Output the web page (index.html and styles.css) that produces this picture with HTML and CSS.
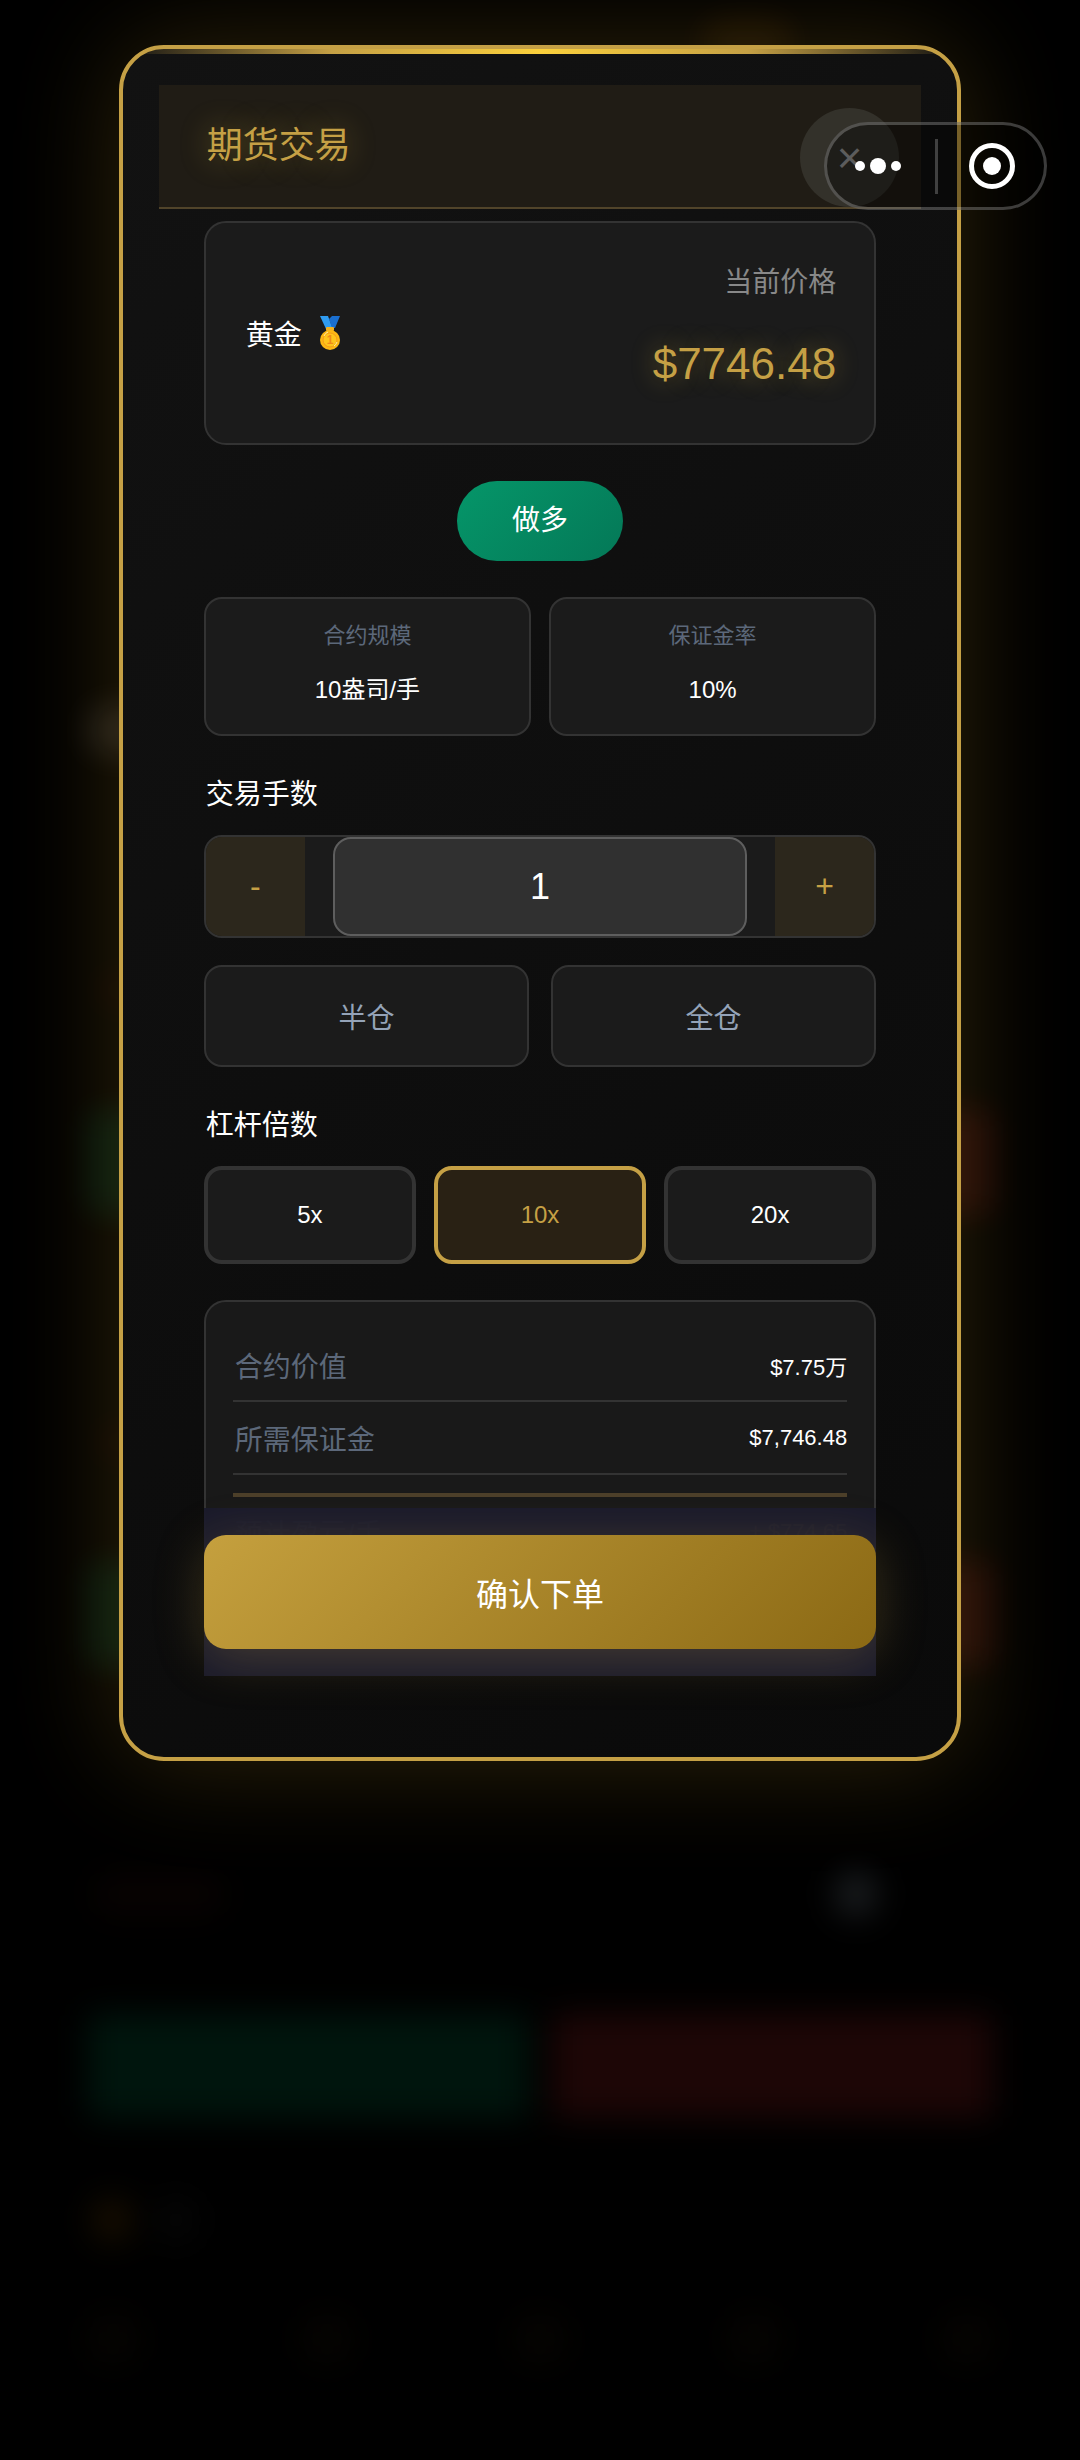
FILE: index.html
```html
<!DOCTYPE html>
<html lang="zh-CN">
<head>
    <meta charset="UTF-8">
    <meta name="viewport" content="width=device-width, initial-scale=1.0">
    <title>期货交易</title>
    <link rel="stylesheet" href="styles.css">
</head>
<body>

    <!-- market page, dimmed behind the dialog -->
    <div class="market" aria-hidden="true">
        <div class="market-top"><span class="blob orange"></span></div>
        <div class="market-title"><span class="blob white"></span></div>
        <div class="market-card">
            <div class="market-info"><span class="blob red"></span><span class="blob pale"></span></div>
            <div class="market-actions"><span class="buy"></span><span class="sell"></span></div>
        </div>
        <div class="market-card">
            <div class="market-info"><span class="blob red"></span><span class="blob pale"></span></div>
            <div class="market-actions"><span class="buy"></span><span class="sell"></span></div>
        </div>
        <div class="market-card">
            <div class="market-info"><span class="blob red"></span><span class="blob pale"></span></div>
            <div class="market-actions"><span class="buy"></span><span class="sell"></span></div>
        </div>
        <div class="market-heading"><span class="blob gold"></span><span class="blob grey"></span></div>
        <div class="market-tabs">
            <span class="blob tab"></span>
            <span class="blob tab"></span>
            <span class="blob tab"></span>
            <span class="blob tab"></span>
            <span class="blob tab"></span>
        </div>
    </div>

    <main class="overlay">
        <section class="modal">
            <header class="modal-header">
                <h1>期货交易</h1>
                <button type="button" class="close-btn" aria-label="关闭">×</button>
            </header>

            <form class="modal-body">
                <div class="price-card">
                    <div class="product">
                        <span>黄金</span>
                        <svg class="medal" viewBox="0 0 20 34">
                            <path d="M0 0h8l5 13H6z" fill="#2f9bf0"/>
                            <path d="M12 0h8l-5 12h-3L9 3z" fill="#1a6fd0"/>
                            <rect x="6" y="11" width="8" height="4" rx="1" fill="#f2b01e"/>
                            <circle cx="10" cy="24" r="10" fill="#fcb814"/>
                            <circle cx="10" cy="24" r="7" fill="#fec51c" stroke="#f49a1a" stroke-width="1"/>
                            <path d="M4 20a7 7 0 0 1 4-4M17 26a7 7 0 0 1-3 4" fill="none" stroke="#fff0a0" stroke-width="1"/>
                            <text x="10" y="28" text-anchor="middle">1</text>
                        </svg>
                    </div>
                    <div class="price">
                        <span class="price-label">当前价格</span>
                        <span class="price-value">$7746.48</span>
                    </div>
                </div>

                <div class="direction">做多</div>

                <div class="info-grid">
                    <div class="info-card">
                        <span class="info-label">合约规模</span>
                        <span class="info-value">10盎司/手</span>
                    </div>
                    <div class="info-card">
                        <span class="info-label">保证金率</span>
                        <span class="info-value">10%</span>
                    </div>
                </div>

                <label class="field-label" for="lots">交易手数</label>
                <div class="stepper">
                    <button type="button" class="step-btn">-</button>
                    <input type="text" id="lots" name="lots" inputmode="numeric" value="1">
                    <button type="button" class="step-btn">+</button>
                </div>
                <div class="quick">
                    <button type="button">半仓</button>
                    <button type="button">全仓</button>
                </div>

                <h2 class="field-label">杠杆倍数</h2>
                <div class="leverage">
                    <button type="button">5x</button>
                    <button type="button" class="active">10x</button>
                    <button type="button">20x</button>
                </div>

                <div class="summary">
                    <div class="summary-row">
                        <span>合约价值</span>
                        <span class="amount">$7.75万</span>
                    </div>
                    <div class="summary-row">
                        <span>所需保证金</span>
                        <span class="amount">$7,746.48</span>
                    </div>
                    <div class="summary-row total">
                        <span>预计盈亏/手</span>
                        <span class="amount">± $774.65</span>
                    </div>
                </div>

                <div class="submit-bar">
                    <button type="submit">确认下单</button>
                </div>
            </form>
        </section>

        <div class="capsule">
            <button type="button" aria-label="更多">
                <svg width="50" height="46" viewBox="0 0 50 46" fill="#fff">
                    <circle cx="7" cy="23" r="5"/>
                    <circle cx="25" cy="23" r="8"/>
                    <circle cx="43" cy="23" r="5"/>
                </svg>
            </button>
            <span class="capsule-line"></span>
            <button type="button" aria-label="退出">
                <svg width="46" height="46" viewBox="0 0 46 46">
                    <circle cx="23" cy="23" r="20.500" fill="none" stroke="#fff" stroke-width="5"/>
                    <circle cx="23" cy="23" r="9" fill="#fff"/>
                </svg>
            </button>
        </div>
    </main>

</body>
</html>
```
FILE: styles.css
```css
* {
    box-sizing: border-box;
}
body {
    margin: 0;
    min-height: 100vh;
    position: relative;
    background: #000;
    color: #fff;
    font-family: "Liberation Sans", "Noto Sans CJK SC", sans-serif;
    font-size: 24px;
}
button, input {
    font-family: inherit;
    color: inherit;
    margin: 0;
    padding: 0;
    border: none;
    background: none;
}
button {
    cursor: pointer;
}

/* dimmed page */
.market {
    display: flex;
    flex-direction: column;
    padding: 0 88px;
    min-height: 100vh;
    filter: blur(16px);
    overflow: hidden;
}
.blob {
    display: block;
    border-radius: 20px;
}
.market-top {
    display: flex;
    justify-content: flex-end;
    height: 706px;
    padding: 20px 200px 0 0;
}
.orange {
    width: 90px;
    height: 40px;
    background: #140c02;
}
.market-title {
    height: 56px;
}
.white {
    width: 60px;
    height: 48px;
    background: #1c1a18;
}
.market-card {
    display: flex;
    flex-direction: column;
    justify-content: flex-end;
    height: 452px;
}
.market-info {
    display: flex;
    justify-content: space-between;
    padding: 0 116px 98px 6px;
}
.red {
    width: 130px;
    height: 44px;
    background: #070201;
}
.pale {
    width: 40px;
    height: 44px;
    background: #1c1f22;
}
.market-actions {
    display: grid;
    grid-template-columns: 1fr 1fr;
    gap: 24px;
}
.buy, .sell {
    height: 104px;
    border-radius: 8px;
}
.buy {
    background: #00150d;
}
.sell {
    background: #1d0606;
}
.market-heading {
    display: flex;
    gap: 24px;
    padding: 80px 4px 0;
}
.gold {
    width: 40px;
    height: 44px;
    background: #180e00;
}
.grey {
    width: 40px;
    height: 44px;
    background: #060606;
}
.market-tabs {
    display: flex;
    justify-content: space-between;
    padding-top: 72px;
}
.tab {
    width: 50px;
    height: 50px;
    background: #060401;
}

/* dialog */
.overlay {
    position: absolute;
    inset: 0;
    padding: 45px 0;
}
.modal {
    position: relative;
    width: 78%;
    margin: 0 auto;
    padding: 36px;
    border: 4px solid #c5a045;
    border-radius: 45px;
    background: linear-gradient(145deg, #121212, #0a0a0a);
    box-shadow: 0 0 110px rgba(212, 165, 45, 0.22);
    overflow: hidden;
}
.modal::before {
    content: "";
    position: absolute;
    top: 0;
    left: 0;
    right: 0;
    height: 5px;
    background: linear-gradient(90deg, transparent, #c5a045 25%, #fbd03c 50%, #c5a045 75%, transparent);
}
.modal-header {
    position: relative;
    display: flex;
    align-items: center;
    height: 124px;
    padding: 0 48px 8px;
    background: #201c15;
    border-bottom: 2px solid #51442a;
}
.modal-header h1 {
    margin: 0;
    font-size: 36px;
    font-weight: 400;
    color: #c5a045;
    text-shadow: 0 0 30px rgba(212, 175, 55, 0.4);
}
.close-btn {
    position: absolute;
    top: 23px;
    right: 22px;
    width: 99px;
    height: 99px;
    border-radius: 50%;
    background: #33312a;
    color: #999;
    font-size: 44px;
}
.modal-body {
    display: flex;
    flex-direction: column;
    padding: 12px 45px 45px;
}
.price-card {
    display: flex;
    justify-content: space-between;
    align-items: center;
    height: 224px;
    padding: 0 38px 0 40px;
    background: #1b1b1b;
    border: 2px solid #333;
    border-radius: 22px;
}
.product {
    display: flex;
    align-items: center;
    gap: 18px;
    font-size: 28px;
}
.medal {
    width: 20px;
    height: 34px;
}
.medal text {
    font-size: 12px;
    font-weight: 700;
    fill: #f08a1a;
}
.price {
    display: flex;
    flex-direction: column;
    gap: 20px;
    text-align: right;
}
.price-label {
    font-size: 28px;
    line-height: 42px;
    color: #888;
}
.price-value {
    font-size: 44px;
    line-height: 80px;
    color: #c5a045;
    text-shadow: 0 0 24px rgba(212, 175, 55, 0.4);
}
.direction {
    align-self: center;
    margin: 36px 0;
    padding: 0 55px;
    line-height: 80px;
    border-radius: 40px;
    background: linear-gradient(135deg, #059669, #047857);
    font-size: 28px;
}
.info-grid {
    display: grid;
    grid-template-columns: 1fr 1fr;
    gap: 18px;
}
.info-card {
    display: flex;
    flex-direction: column;
    gap: 18px;
    padding: 20px 12px 24px;
    text-align: center;
    background: #1b1b1b;
    border: 2px solid #333;
    border-radius: 18px;
}
.info-label {
    font-size: 22px;
    line-height: 33px;
    color: #5c687a;
}
.info-value {
    font-size: 24px;
    line-height: 40px;
}
.field-label {
    margin: 36px 0 18px;
    padding-left: 2px;
    font-size: 28px;
    font-weight: 400;
    line-height: 45px;
}
.stepper {
    display: flex;
    justify-content: space-between;
    height: 103px;
    background: #1b1b1b;
    border: 2px solid #333;
    border-radius: 18px;
    overflow: hidden;
}
.step-btn {
    width: 99px;
    background: #2c271c;
    color: #c5a045;
    font-size: 32px;
}
.stepper input {
    width: 62%;
    text-align: center;
    font-size: 36px;
    background: #303030;
    border: 2px solid #5e5e5e;
    border-radius: 18px;
}
.quick {
    display: grid;
    grid-template-columns: 1fr 1fr;
    gap: 22px;
    margin-top: 27px;
}
.quick button {
    height: 102px;
    background: #1b1b1b;
    border: 2px solid #333;
    border-radius: 18px;
    color: #94a3b8;
    font-size: 28px;
}
.leverage {
    display: grid;
    grid-template-columns: 1fr 1fr 1fr;
    gap: 18px;
}
.leverage button {
    height: 98px;
    background: #1b1b1b;
    border: 4px solid #333;
    border-radius: 18px;
    font-size: 24px;
}
.leverage .active {
    background: #292114;
    border-color: #c5a045;
    color: #c5a045;
}
.summary {
    margin-top: 36px;
    padding: 27px;
    background: #191919;
    border: 2px solid #333;
    border-radius: 22px;
}
.summary-row {
    display: flex;
    justify-content: space-between;
    align-items: center;
    height: 73px;
    padding-left: 2px;
    border-bottom: 2px solid #333;
    font-size: 28px;
    color: #5c687a;
}
.summary-row.total {
    margin-top: 18px;
    border-top: 4px solid #4d402a;
    border-bottom: none;
}
.amount {
    font-size: 22px;
    color: #fff;
}
.total .amount {
    color: #c5a045;
}
/* stays over the end of the summary */
.submit-bar {
    position: sticky;
    bottom: 0;
    margin-top: -87px;
    padding: 27px 0;
    background: rgba(27, 27, 44, 0.98);
}
.submit-bar button {
    display: block;
    width: 100%;
    height: 114px;
    border-radius: 22px;
    background: linear-gradient(135deg, #c5a03e, #8b6914);
    box-shadow: 0 9px 50px rgba(197, 160, 69, 0.25);
    font-size: 32px;
}

/* mini program capsule */
.capsule {
    position: absolute;
    top: 122px;
    right: 33px;
    display: flex;
    align-items: center;
    justify-content: space-between;
    width: 223px;
    height: 88px;
    padding: 0 29px 0 26px;
    border: 3px solid rgba(255, 255, 255, 0.23);
    border-radius: 44px;
    background: rgba(0, 0, 0, 0.4);
}
.capsule svg {
    display: block;
}
.capsule-line {
    width: 3px;
    height: 55px;
    background: #404040;
}
```
